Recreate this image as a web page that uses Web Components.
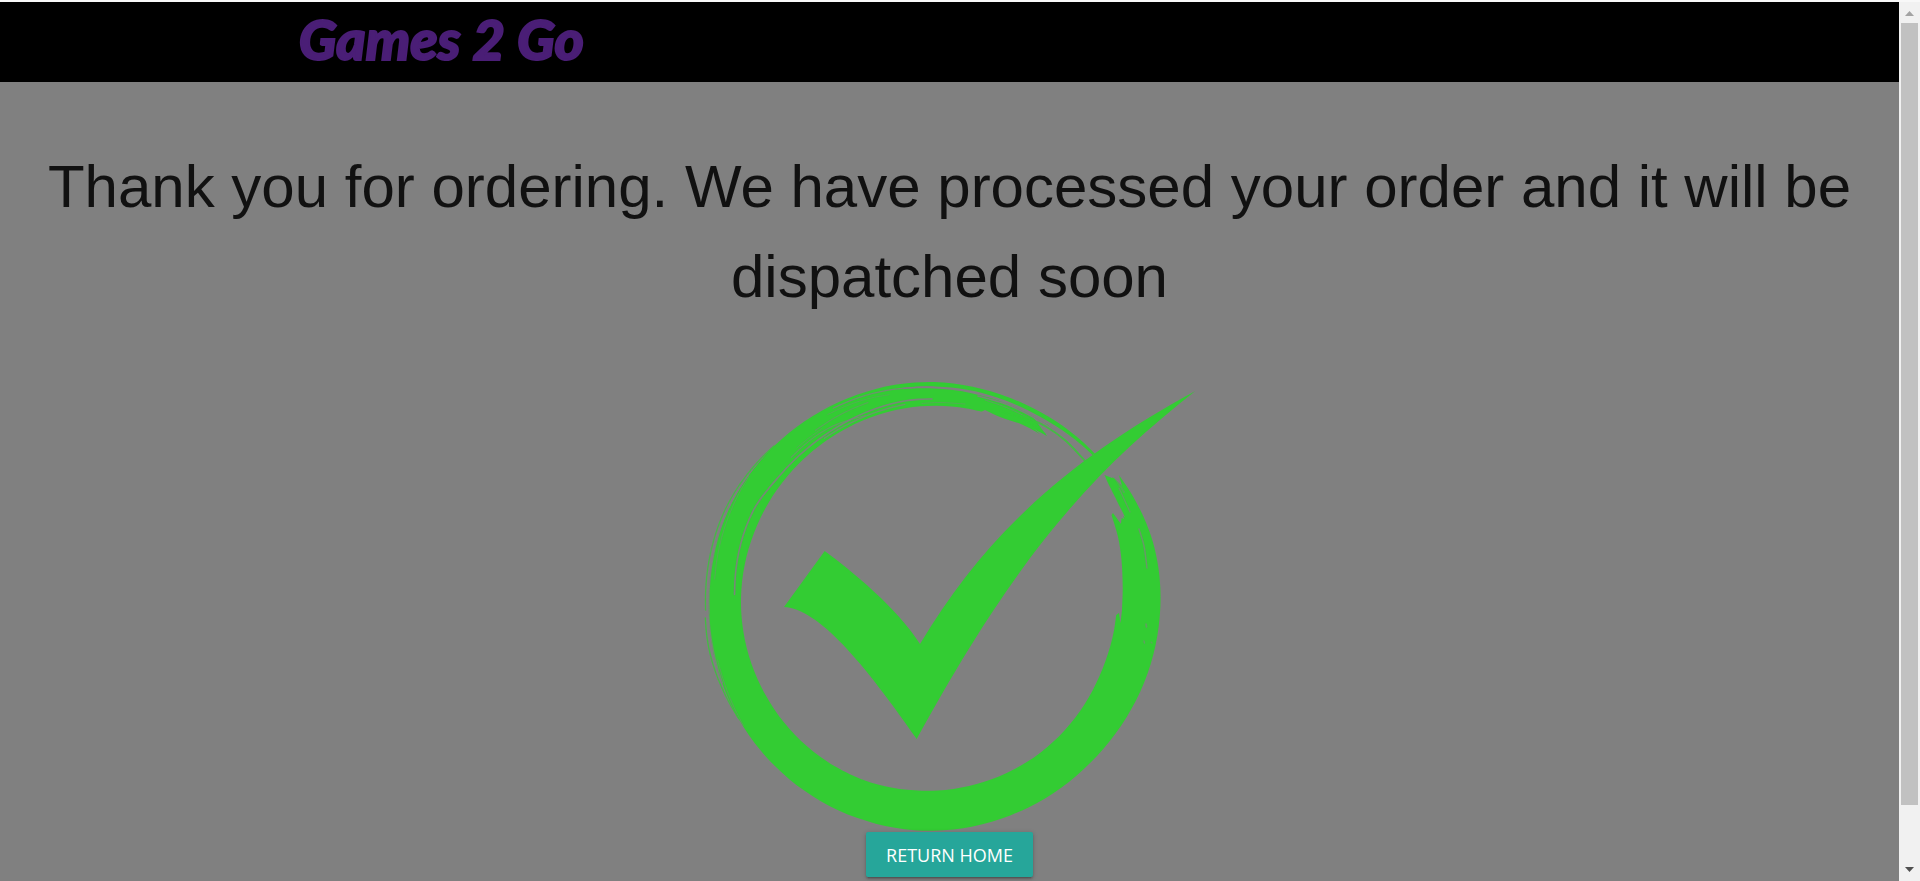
<!DOCTYPE html>
<html lang="en">
<head>
<meta charset="utf-8">
<title>Games 2 Go</title>
<style>
html, body { margin: 0; height: 100%; }
body { background: #808080; font-family: "Liberation Sans", Arial, sans-serif; color: #111; }
</style>
</head>
<body>
<order-page>
  <site-header slot="header" href="#home">Games 2 Go</site-header>
  <order-message>Thank you for ordering. We have processed your order and it will be dispatched soon</order-message>
  <check-mark></check-mark>
  <action-button>Return home</action-button>
</order-page>
<script>
function attach(el, html) {
  const t = document.createElement('template');
  t.innerHTML = html;
  el.attachShadow({ mode: 'open' }).append(t.content.cloneNode(true));
}

customElements.define('order-page', class extends HTMLElement {
  constructor() {
    super();
    attach(this, `
      <style>
        :host { display: grid; grid-template-columns: minmax(0, 1fr) auto; height: 100vh; box-sizing: border-box; border-top: 2px solid #f8f8f8; overflow: hidden; }
        .view { display: flex; flex-direction: column; min-height: 0; overflow: hidden; }
        main { display: flex; flex-direction: column; align-items: center; }
      </style>
      <div class="view"><slot name="header"></slot><main><slot></slot></main></div>
      <scroll-rail></scroll-rail>`);
  }
});

customElements.define('site-header', class extends HTMLElement {
  constructor() {
    super();
    attach(this, `
      <style>
        :host { display: block; flex: none; background: #000; }
        nav { display: flex; width: 70%; height: 80px; margin: 0 auto; }
        a { padding: 0 14px; color: #4a1e76; font: italic 900 56px/74px Lato, sans-serif; -webkit-text-stroke: 2px #4a1e76; text-decoration: none; white-space: nowrap; }
      </style>
      <nav><a><slot></slot></a></nav>`);
    this.shadowRoot.querySelector('a').href = this.getAttribute('href') || '#';
  }
});

customElements.define('order-message', class extends HTMLElement {
  constructor() {
    super();
    attach(this, `
      <style>
        :host { display: block; align-self: stretch; }
        h1 { margin: 60px 0 58px; font-size: 60px; font-weight: 400; line-height: 90px; text-align: center; }
      </style>
      <h1><slot></slot></h1>`);
  }
});

customElements.define('action-button', class extends HTMLElement {
  constructor() {
    super();
    attach(this, `
      <style>
        :host { display: block; }
        button { display: block; height: 45px; padding: 2px 20px 0; border: 0; border-radius: 2px; background: #26a69a; color: #fff; font: 400 18px/43px "Open Sans", sans-serif; text-transform: uppercase; cursor: pointer;
          box-shadow: 0 2px 2px 0 rgba(0,0,0,.14), 0 3px 1px -2px rgba(0,0,0,.12), 0 1px 5px 0 rgba(0,0,0,.2); }
      </style>
      <button type="button"><slot></slot></button>`);
  }
});

customElements.define('scroll-rail', class extends HTMLElement {
  constructor() {
    super();
    attach(this, `
      <style>
        :host { display: grid; grid-template-rows: 21px 1fr 21px; width: 21px; background: #f1f1f1; }
        .track { padding: 0 2px; }
        .thumb { height: calc(100% - 55px); background: #c1c1c1; }
        svg { display: block; width: 21px; height: 21px; }
      </style>
      <svg viewBox="0 0 21 21" aria-hidden="true"><path d="M6 14 10.500 9 15 14z" fill="#a3a3a3"/></svg>
      <div class="track"><div class="thumb"></div></div>
      <svg viewBox="0 0 21 21" aria-hidden="true"><path d="M6 7h9l-4.500 5z" fill="#505050"/></svg>`);
  }
});

/* Brush-stroke circle with a tick. A run is a list of "x,y" points smoothed
   into one curve; runs meet at sharp corners. */
function smooth(runs, close = true) {
  let d = '';
  runs.forEach((run, r) => {
    const p = Array.isArray(run) ? run : run.trim().split(/\s+/).map(s => s.split(',').map(Number));
    d += (r ? 'L' : 'M') + p[0];
    for (let i = 0; i < p.length - 1; i++) {
      const a = p[i - 1] || p[i], b = p[i], c = p[i + 1], e = p[i + 2] || c;
      d += 'C' + [b[0] + (c[0] - a[0]) / 6, b[1] + (c[1] - a[1]) / 6,
                  c[0] - (e[0] - b[0]) / 6, c[1] - (e[1] - b[1]) / 6, c[0], c[1]].map(v => v.toFixed(2));
    }
  });
  return d + (close ? 'Z' : '');
}
/* Round run from "angle:radius" knots about a centre, angles clockwise from the right. */
function rim(cx, cy, text) {
  const k = text.trim().split(/\s+/).map(s => s.split(':').map(Number)), out = [];
  const slope = i => {
    const a = k[Math.max(i - 1, 0)], b = k[Math.min(i + 1, k.length - 1)];
    return (b[1] - a[1]) / (b[0] - a[0]);
  };
  for (let i = 0; i < k.length - 1; i++) {
    const span = k[i + 1][0] - k[i][0], n = Math.ceil(Math.abs(span) / 5);
    for (let j = i ? 1 : 0; j <= n; j++) {
      const t = j / n, u = 1 - t;
      const a = (k[i][0] + span * t) * Math.PI / 180;
      const r = k[i][1] * u * u * (1 + 2 * t) + k[i + 1][1] * t * t * (3 - 2 * t)
              + span * (slope(i) * t * u * u - slope(i + 1) * t * t * u);
      out.push([+(cx + r * Math.cos(a)).toFixed(2), +(cy + r * Math.sin(a)).toFixed(2)]);
    }
  }
  return out;
}
const outer = t => rim(934, 606, t), inner = t => rim(932, 598, t);
const RING = [
  outer('-35.3:226.500 -15:228 10:225 40:221.500 65:222.500 95:225 135:225.700 180:225.500 205:227 240:225.300 270:224 290:221.500 316.6:221.500'),
  outer('316.4:219 300:217 283:218.300 262:220.500'),
  outer('262:219 270:217.500 285:215.500 305:213'),
  '1048,425 1033,417', '1047,436 1034,429',
  '1040,434 1022,424.500 1000,417 985,410',
  inner('285:193 262:191.700 235:189.500 205:189.300 180:191 150:192.700 115:194.500 93:193 60:189.500 25:184.800 5.3:185'),
  '1119,613 1120.500,623', '1122,610 1122.700,587 1121.500,560 1118,537 1111.500,515',
  '1113,513 1121,524', '1121.500,518 1124,519', '1123,516 1125,517',
  '1125,517 1114,495 1108,483 1104.500,475', '1112,478 1114,478 1122,486'
];
const TICK = 'M784 607 824.700 551C852 571 898 609 920 644C985 535 1068 460 1195 391.300C1095 470 1020 550 916.700 739C855 650 815 609 784 607Z';
/* bristle gaps in the paint: [run, width, opacity] */
const GAPS = [
  [inner('181:197.500 206:199 218:195.500 236:195 250:197 262:199 270:199'), 1.6, .9],
  [inner('225:199 238:199 250:194'), 1.2, .6],
  [inner('236:192.500 250:193.500 262:195.500'), 1.4, .7],
  [inner('228:202 237:202'), 1, .4],
  [outer('236:212 244:213 252:214'), 1.2, .5],
  [outer('243:222 252:221.500 262:220 270:219'), 1.2, .8],
  [outer('241:219 250:218 258:216'), 1, .4],
  [outer('178:225 190:226 205:227.500 222:227'), 1.4, .8],
  [outer('187:221 200:223.500 215:226'), 1, .45],
  [outer('178:225.500 168:225 160:225'), 1.2, .7],
  [outer('166:223 158:223.500 148:225'), 1, .5],
  ['978,396 1007,404.500 1033,417 1055,431', 1.6, .9],
  ['985,400 1010,409 1040,424', 1, .5],
  ['1115,478 1124,492', 2, .4],
  ['1119,488 1130,512', 1.2, .6],
  ['1139,529 1144,546 1147,568', 1.4, .7],
  ['922,403.500 940,402.500 965,404', 1, .4],
  ['1146,624 1146.500,627', 1.6, .6], ['1144,641 1144.500,643', 1.4, .6], ['1151,642 1152,643', 1.2, .5]
];
const STRANDS = [
  [outer('179:228.500 205:230 225:226.500'), 1.3, .75],
  [outer('177:229 168:229 150:225.500'), 1.3, .8],
  ['1023,416 1045,426 1066,441 1085,461', 1.8, .8],
  ['1000,411 1025,420 1045,434', 1.4, .9]
];
customElements.define('check-mark', class extends HTMLElement {
  constructor() {
    super();
    const lines = (list, colour) => list.map(([p, w, o]) =>
      `<path d="${smooth([p], false)}" fill="none" stroke="${colour}" stroke-width="${w}" stroke-opacity="${o}" stroke-linecap="round"/>`).join('');
    attach(this, `
      <style>
        :host { display: block; width: 500px; max-width: 100%; }
        svg { display: block; width: 100%; height: auto; }
      </style>
      <svg viewBox="700 380 500 452" role="img" aria-label="Order confirmed">
        <path fill="#3c3" d="${smooth(RING)}"/>
        ${lines(GAPS, '#808080')}${lines(STRANDS, '#3c3')}
        <path fill="#3c3" d="${TICK}"/>
      </svg>`);
  }
});
</script>
</body>
</html>
